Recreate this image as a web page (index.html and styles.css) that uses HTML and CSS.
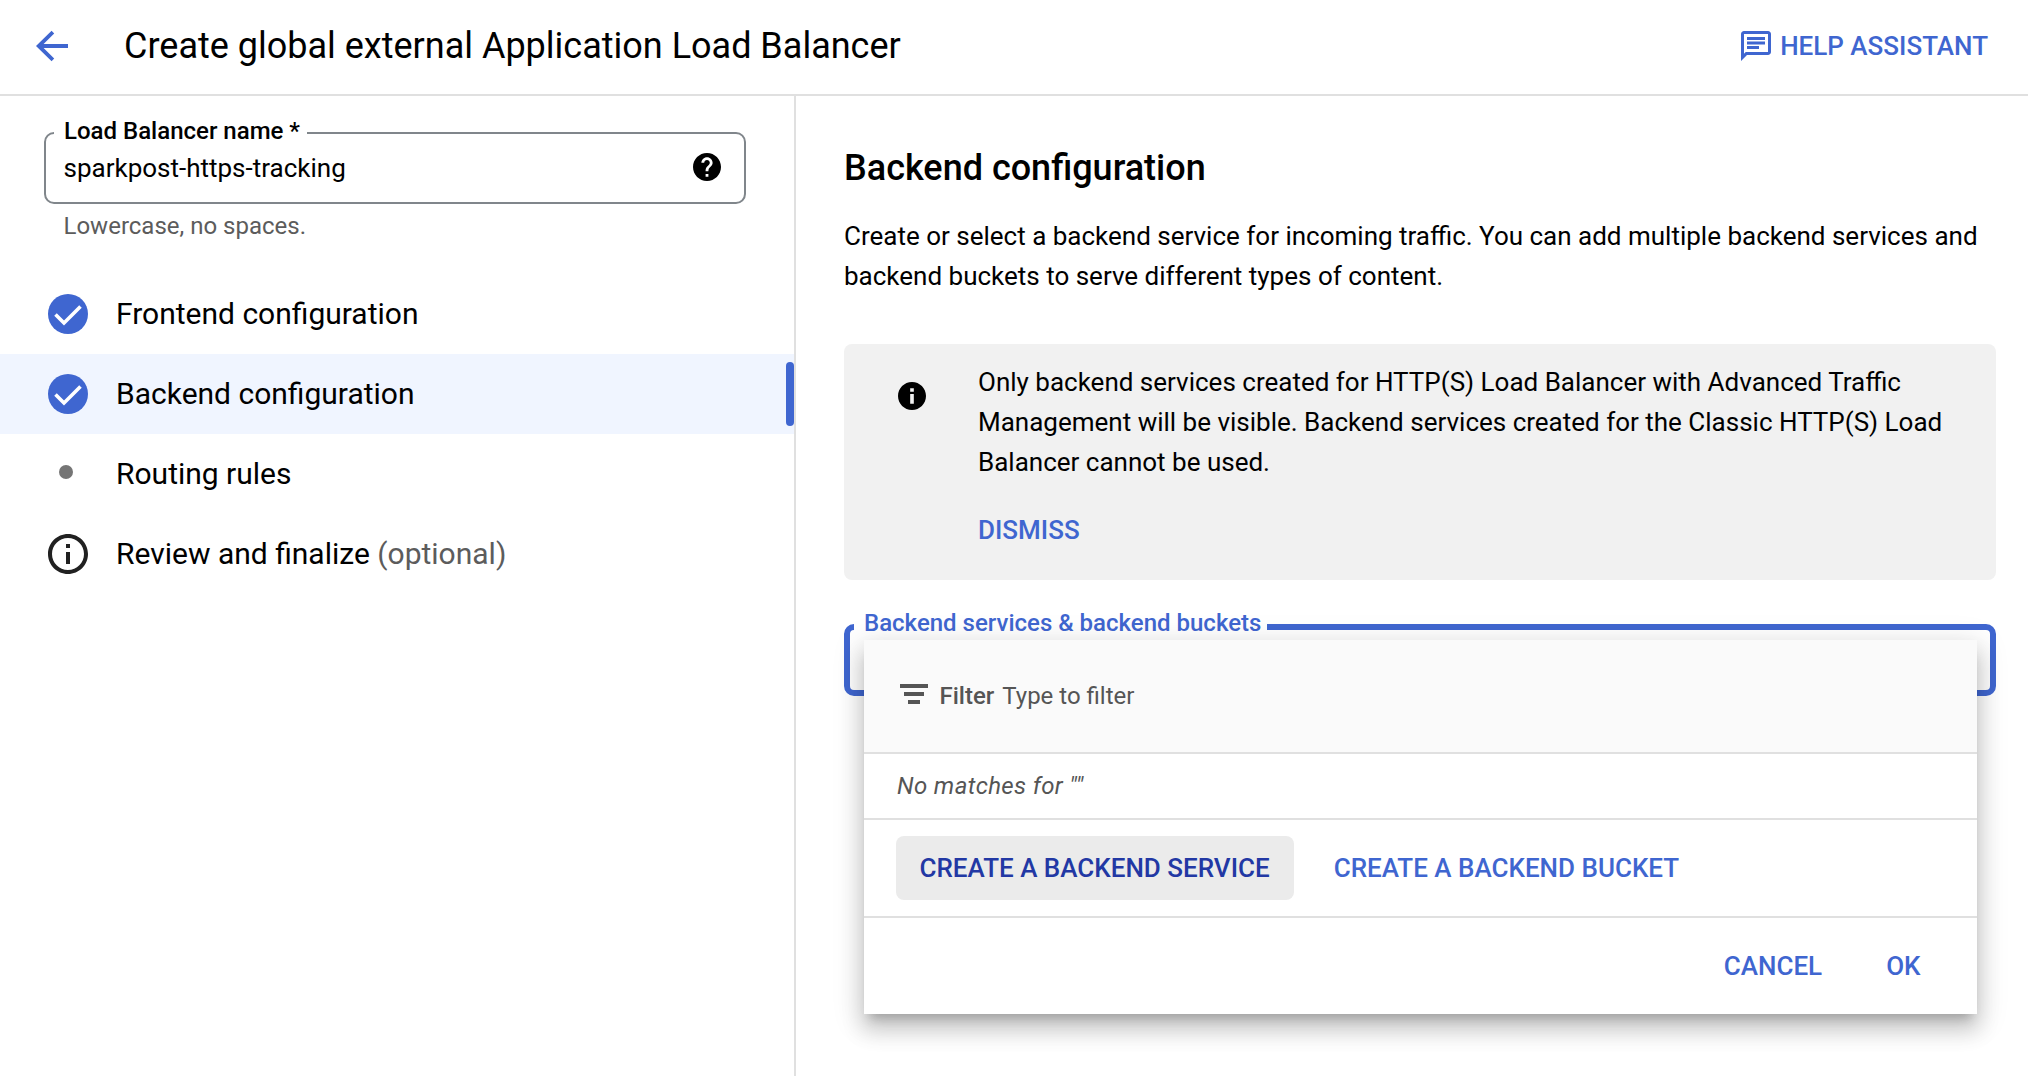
FILE: index.html
```html
<!DOCTYPE html>
<html lang="en">
<head>
<meta charset="utf-8">
<title>Create global external Application Load Balancer</title>
<link rel="stylesheet" href="styles.css">
</head>
<body>
<header class="topbar">
  <svg class="back" viewBox="0 0 32 32"><path d="M32 14H7.6L18.2 3.4 15.6.8 0 16l15.6 15.2 2.6-2.6L7.6 18H32z"/></svg>
  <h1 class="title">Create global external Application Load Balancer</h1>
  <a class="help">
    <svg class="help-icon" viewBox="2 2 20 20"><path d="M4 4h16v12H5.17L4 17.17V4m0-2c-1.1 0-1.99.9-1.99 2L2 22l4-4h14c1.1 0 2-.9 2-2V4c0-1.1-.9-2-2-2H4zm2 10h8v2H6v-2zm0-3h12v2H6V9zm0-3h12v2H6V6z"/></svg>
    <span>HELP ASSISTANT</span>
  </a>
</header>
<div class="page">
  <aside class="sidebar">
    <div class="field">
      <span class="field-label">Load Balancer name *</span>
      <span class="field-value">sparkpost-https-tracking</span>
      <svg class="field-help" viewBox="2 2 20 20"><path d="M12 2C6.48 2 2 6.48 2 12s4.48 10 10 10 10-4.48 10-10S17.52 2 12 2zm1 17h-2v-2h2v2zm2.07-7.75l-.9.92C13.45 12.9 13 13.5 13 15h-2v-.5c0-1.1.45-2.1 1.17-2.83l1.24-1.26c.37-.36.59-.86.59-1.41 0-1.1-.9-2-2-2s-2 .9-2 2H8c0-2.21 1.79-4 4-4s4 1.79 4 4c0 .88-.36 1.68-.93 2.25z"/></svg>
    </div>
    <p class="hint">Lowercase, no spaces.</p>
    <ul class="steps">
      <li class="step">
        <svg class="step-icon done" viewBox="0 0 40 40"><circle cx="20" cy="20" r="20"/><path d="M7.5 20.5l8.5 8.5L32.5 12.5"/></svg>
        <span>Frontend configuration</span>
      </li>
      <li class="step active">
        <svg class="step-icon done" viewBox="0 0 40 40"><circle cx="20" cy="20" r="20"/><path d="M7.5 20.5l8.5 8.5L32.5 12.5"/></svg>
        <span>Backend configuration</span>
      </li>
      <li class="step">
        <svg class="step-icon pending" viewBox="0 0 40 40"><circle cx="18" cy="18" r="7"/></svg>
        <span>Routing rules</span>
      </li>
      <li class="step">
        <svg class="step-icon review" viewBox="2 2 20 20"><path d="M11 7h2v2h-2zm0 4h2v6h-2zm1-9C6.48 2 2 6.48 2 12s4.48 10 10 10 10-4.48 10-10S17.52 2 12 2zm0 18c-4.41 0-8-3.59-8-8s3.59-8 8-8 8 3.59 8 8-3.59 8-8 8z"/></svg>
        <span>Review and finalize <span class="optional">(optional)</span></span>
      </li>
    </ul>
  </aside>
  <main class="main">
    <h2 class="heading">Backend configuration</h2>
    <p class="intro">Create or select a backend service for incoming traffic. You can add multiple backend services and backend buckets to serve different types of content.</p>
    <section class="notice">
      <svg class="notice-icon" viewBox="2 2 20 20"><path d="M12 2C6.48 2 2 6.48 2 12s4.48 10 10 10 10-4.48 10-10S17.52 2 12 2zm1.3 15.5h-2.6v-7h2.6v7zm0-8.5h-2.6V6.5h2.6V9z"/></svg>
      <div class="notice-body">
        <p class="notice-text">Only backend services created for HTTP(S) Load Balancer with Advanced Traffic Management will be visible. Backend services created for the Classic HTTP(S) Load Balancer cannot be used.</p>
        <a class="dismiss">DISMISS</a>
      </div>
    </section>
    <div class="select">
      <span class="select-label">Backend services &amp; backend buckets</span>
      <div class="popup">
        <div class="filter">
          <svg class="filter-icon" viewBox="0 0 28 20"><path d="M0 0h28v4H0zM4 8h20v4H4zM8 16h12v4H8z"/></svg>
          <span class="filter-name">Filter</span>
          <span class="filter-hint">Type to filter</span>
        </div>
        <div class="empty">No matches for ""</div>
        <div class="create">
          <button class="btn hovered">CREATE A BACKEND SERVICE</button>
          <button class="btn">CREATE A BACKEND BUCKET</button>
        </div>
        <div class="actions">
          <button class="btn">CANCEL</button>
          <button class="btn">OK</button>
        </div>
      </div>
    </div>
  </main>
</div>
</body>
</html>
```
FILE: styles.css
```css
* { box-sizing: border-box; }
body {
  margin: 0;
  height: 1076px;
  display: flex;
  flex-direction: column;
  overflow: hidden;
  background: #fff;
  color: #000;
  font: 400 26px/40px Roboto, sans-serif;
}
h1, h2, p, ul { margin: 0; padding: 0; }
svg { flex: none; display: block; }
.topbar {
  flex: none;
  height: 96px;
  display: flex;
  align-items: center;
  padding: 0 40px 2px 36px;
  border-bottom: 2px solid #e0e0e0;
}
.back { width: 32px; height: 32px; fill: #3f66d0; }
.title { flex: 1; margin-left: 56px; font-size: 36px; font-weight: 400; }
.help {
  display: flex;
  align-items: center;
  gap: 9px;
  color: #3f66d0;
  font-weight: 500;
}
.help-icon { width: 30px; height: 30px; fill: #3f66d0; }
.page { flex: 1; display: flex; min-height: 0; }
.sidebar { width: 796px; flex: none; border-right: 2px solid #e0e0e0; padding-top: 36px; }
.field {
  position: relative;
  display: flex;
  align-items: center;
  justify-content: space-between;
  width: 702px;
  height: 72px;
  margin-left: 44px;
  padding: 0 23px 0 17.5px;
  border: 2px solid #80868b;
  border-radius: 10px;
}
.field-label {
  position: absolute;
  left: 8px;
  top: -18px;
  padding: 0 7px 0 10px;
  background: #fff;
  font-size: 24px;
  line-height: 30px;
  font-weight: 500;
  white-space: nowrap;
}
.field-help { width: 28px; height: 28px; margin-bottom: 2px; }
.hint { margin: 2px 0 0 63.5px; font-size: 24px; color: #5c5c5c; }
.steps { list-style: none; margin-top: 28px; }
.step {
  position: relative;
  height: 80px;
  display: flex;
  align-items: center;
  gap: 28px;
  padding-left: 48px;
  font-size: 30px;
}
.step.active { background: #f0f5ff; }
.step.active::after {
  content: "";
  position: absolute;
  right: 0;
  top: 8px;
  width: 8px;
  height: 64px;
  border-radius: 4px;
  background: #3f66d0;
}
.step-icon { width: 40px; height: 40px; }
.done circle { fill: #3f66d0; }
.done path { fill: none; stroke: #fff; stroke-width: 3.6; }
.pending { fill: #757575; }
.review { fill: #212121; }
.optional { color: #5c5c5c; }
.main { flex: 1; padding: 52px 32px 0 48px; }
.heading { font-size: 36px; font-weight: 500; }
.intro { margin-top: 28px; }
.notice {
  display: flex;
  gap: 52px;
  height: 236px;
  margin-top: 48px;
  padding: 18px 40px 0 54px;
  border-radius: 8px;
  background: #f1f1f1;
}
.notice-icon { width: 28px; height: 28px; margin-top: 20px; }
.dismiss { display: block; margin-top: 28px; font-weight: 500; color: #3f66d0; }
.select {
  position: relative;
  height: 72px;
  margin-top: 44px;
  border: 6px solid #3f66d0;
  border-radius: 10px;
}
.select-label {
  position: absolute;
  left: 4px;
  top: -22px;
  padding: 0 6px 0 10px;
  background: #fff;
  color: #3f66d0;
  font-size: 24px;
  line-height: 30px;
  font-weight: 500;
  white-space: nowrap;
}
.popup {
  position: absolute;
  left: 14px;
  top: 10px;
  width: 1113px;
  background: #fff;
  box-shadow: 0 10px 10px -6px rgba(0,0,0,.2), 0 16px 20px 2px rgba(0,0,0,.14), 0 6px 28px 4px rgba(0,0,0,.12);
}
.filter {
  height: 114px;
  display: flex;
  align-items: center;
  padding: 0 36px;
  background: #fafafa;
  border-bottom: 2px solid #e0e0e0;
  color: #555;
  font-size: 24px;
}
.filter-icon { width: 28px; height: 20px; fill: #555; margin: 0 11.5px 4px 0; }
.filter-name { font-weight: 500; margin-right: 8px; }
.empty {
  height: 66px;
  padding: 12px 32px 12px 33px;
  border-bottom: 2px solid #e0e0e0;
  color: #555;
  font-size: 24px;
  font-style: italic;
  letter-spacing: .36px;
}
.create {
  height: 98px;
  display: flex;
  align-items: center;
  gap: 16px;
  padding: 0 32px;
  border-bottom: 2px solid #e0e0e0;
}
.actions {
  height: 96px;
  display: flex;
  align-items: center;
  justify-content: flex-end;
  gap: 16px;
  padding: 0 32px;
}
.btn {
  height: 64px;
  padding: 0 24.5px 0 23.5px;
  border: 0;
  border-radius: 8px;
  background: none;
  color: #3f66d0;
  font: 500 26px/64px Roboto, sans-serif;
}
.btn.hovered { background: #ebebeb; color: #2238a4; }
```
